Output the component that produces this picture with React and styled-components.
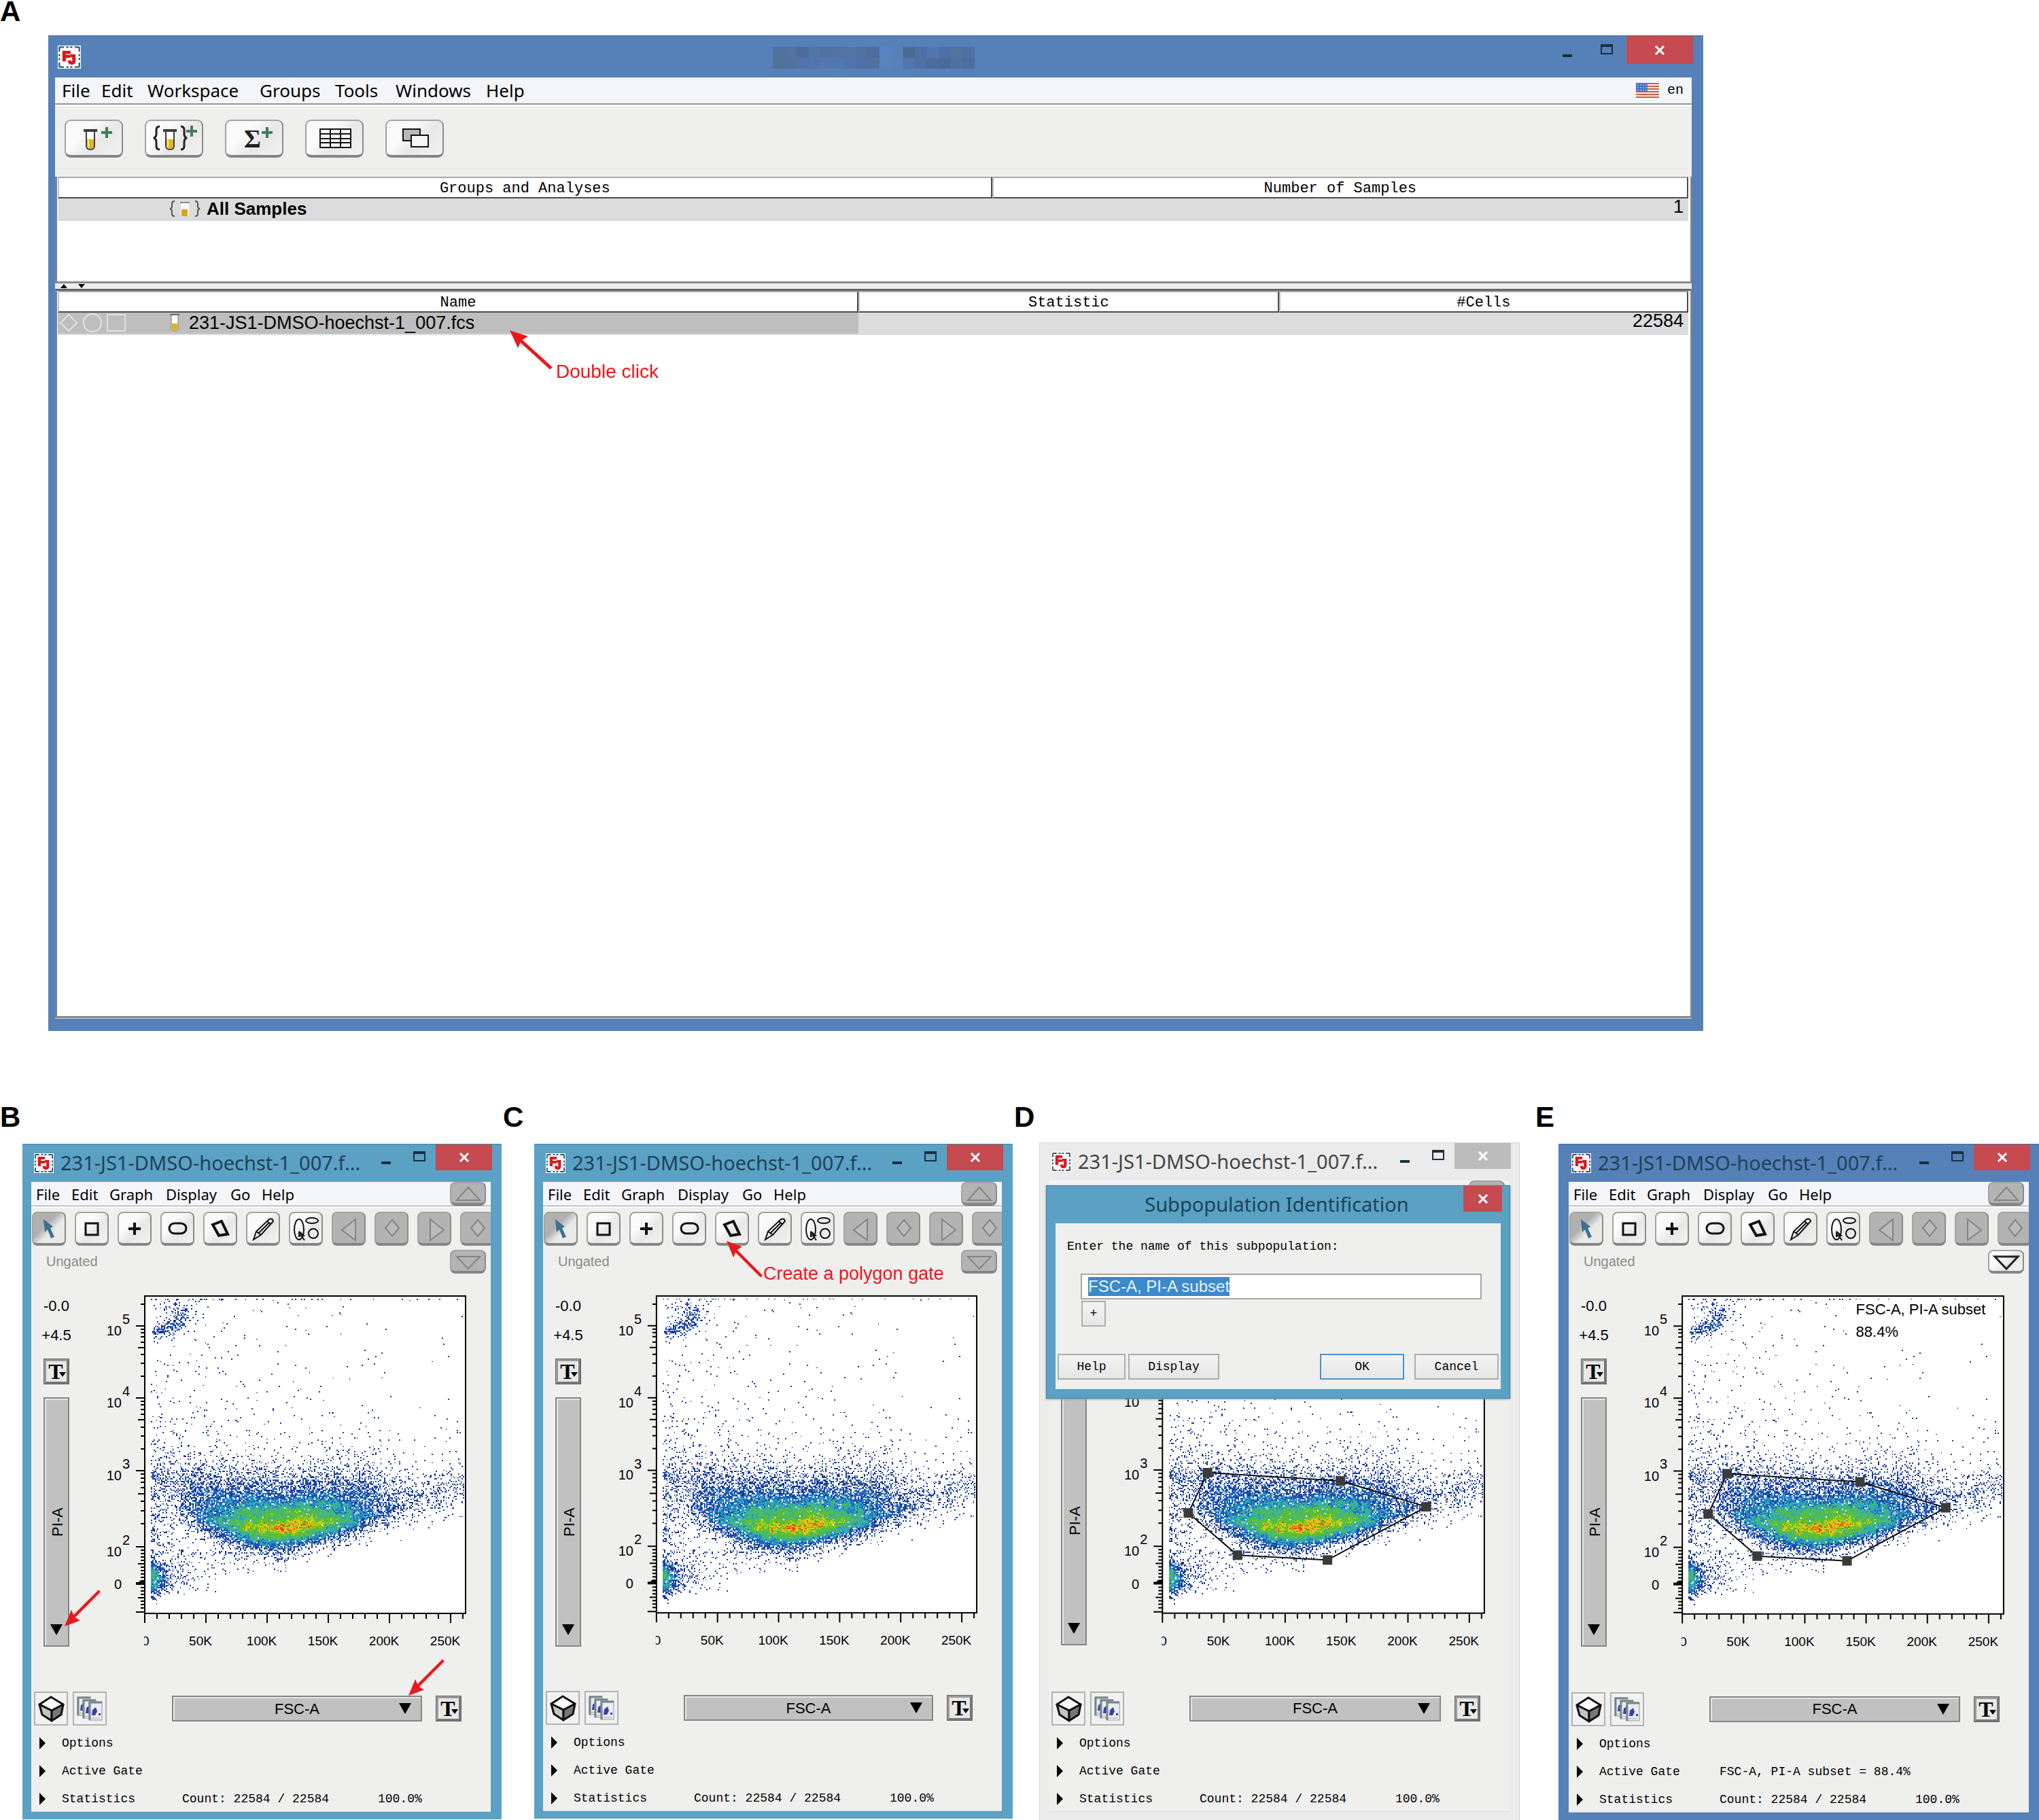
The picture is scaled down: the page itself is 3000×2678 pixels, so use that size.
import React, { useEffect, useRef } from "react";
import styled, { createGlobalStyle, css } from "styled-components";

const SANS = `"Liberation Sans", Arial, sans-serif`;
const UI = `"Noto Sans", "Open Sans", sans-serif`;
const MONO = `"Liberation Mono", monospace`;
const FILE_NAME = "231-JS1-DMSO-hoechst-1_007";

const GlobalStyle = createGlobalStyle`
  * {
    box-sizing: border-box;
  }

  body {
    margin: 0;
    background: #ffffff;
    color: #000000;
    font-family: ${SANS};
  }

  button,
  input,
  select {
    margin: 0;
    padding: 0;
    border-radius: 0;
    font: inherit;
    color: inherit;
  }

  svg {
    display: block;
  }
`;

/* ---------- page ---------- */

const Page = styled.main`
  overflow: hidden;
`;

const PanelLabel = styled.h2`
  margin: 0 0 ${({ $gap }) => $gap || 22}px;
  font-size: 42px;
  line-height: 34px;
  font-weight: bold;
`;

const WorkspacePanel = styled.section`
  width: 84%;
  padding-right: 14px;
  margin-bottom: 110px;
`;

const PanelRow = styled.div`
  display: grid;
  grid-template-columns: 740fr 752fr 767fr 741fr;
`;

const Panel = styled.section`
  min-width: 0;
`;

const WindowSlot = styled.div`
  position: relative;
  margin-left: ${({ $left }) => $left}px;
  margin-right: ${({ $right }) => $right}px;
`;

/* ---------- window frame ---------- */

const frames = {
  teal: css`
    background: #5aa1c4;
    border-top: 1px solid #4583a5;
  `,
  blue: css`
    background: #5680b8;
    border-top: 1px solid #4469a0;
  `,
  inactive: css`
    background: #ebebeb;
    border: 1px solid #d6d6d6;
  `,
};

const Frame = styled.div`
  ${({ $tone }) => frames[$tone]}
  padding: 0 ${({ $right }) => $right}px ${({ $bottom }) => $bottom}px
    ${({ $left }) => $left}px;
`;

const TitleBar = styled.header`
  display: flex;
  align-items: center;
  height: ${({ $large }) => ($large ? 61 : 55)}px;
  padding-left: 4px;
  margin-right: -2px;
  gap: 10px;
`;

const Title = styled.h3`
  flex: 1;
  margin: 0 0 2px;
  font-family: ${UI};
  font-size: 29px;
  line-height: 40px;
  font-weight: normal;
  white-space: nowrap;
  color: ${({ $tone }) => ($tone === "inactive" ? "#444444" : "#1c4358")};
`;

const Mosaic = styled.svg`
  flex: 1;
`;

const WindowControls = styled.div`
  display: flex;
  align-self: flex-start;
`;

const ControlButton = styled.button`
  display: flex;
  align-items: center;
  justify-content: center;
  width: ${({ $large }) => ($large ? 58 : 49)}px;
  height: ${({ $large }) => ($large ? 41 : 38)}px;
  border: 0;
  background: transparent;
`;

const CloseButton = styled(ControlButton)`
  width: ${({ $large, $narrow }) => ($large ? 98 : $narrow ? 57 : 83)}px;
  background: ${({ $tone }) => ($tone === "inactive" ? "#bcbcbc" : "#c54b50")};
`;

const WindowBody = styled.div`
  overflow: hidden;
  background: #efefee;
  border-bottom: 1px solid #d0dbe0;
`;

const MenuBar = styled.nav`
  display: flex;
  align-items: center;
  justify-content: space-between;
  height: ${({ $large }) => ($large ? 40 : 36)}px;
  padding-left: ${({ $large }) => ($large ? 10 : 7)}px;
  padding-right: ${({ $large }) => ($large ? 12 : 7)}px;
  border-bottom: ${({ $large }) => ($large ? 2 : 1)}px solid #969696;
  background: #f4f5f8;
  font-family: ${UI};
  font-size: ${({ $large }) => ($large ? 26 : 22)}px;
  line-height: 32px;
`;

const Menus = styled.div`
  display: grid;
  grid-template-columns: ${({ $columns }) => $columns};
  visibility: ${({ $covered }) => ($covered ? "hidden" : "visible")};
`;

const MenuButton = styled.button`
  border: 0;
  background: transparent;
  text-align: left;
  white-space: nowrap;
`;

const Language = styled.div`
  display: flex;
  align-items: center;
  gap: 12px;
  font-family: ${MONO};
  font-size: 20px;
`;

/* ---------- workspace window ---------- */

const WorkspaceToolbar = styled.div`
  display: flex;
  gap: 32px;
  padding: 20px 14px 28px;
  border-top: 2px solid #ffffff;
`;

const raised = css`
  border: 2px solid #a3a3a3;
  border-right-color: #8b8b8b;
  border-bottom: 4px solid #858585;
  background: linear-gradient(135deg, #fafafa 0 35%, #e7e7e7 60%, #f3f3f3);
`;

const LargeTool = styled.button`
  ${raised}
  width: 86px;
  height: 56px;
  border-radius: 9px;

  svg {
    margin: -2px;
  }
`;

const Pane = styled.div`
  min-height: ${({ $height }) => $height}px;
  padding: 0 3px 0 1px;
  border-left: 3px solid #7282a0;
  border-right: 2px solid #8a8a8a;
  border-bottom: 3px solid #8b8b8b;
  border-top: ${({ $ruled }) => ($ruled ? "3px solid #666666" : "0")};
  background: #ffffff;
`;

const Splitter = styled.div`
  display: flex;
  align-items: center;
  gap: 16px;
  height: 8px;
  padding-left: 8px;
  background: #eeeeee;
`;

const DataTable = styled.table`
  width: 100%;
  table-layout: fixed;
  border-collapse: separate;
  border-spacing: 0;

  th {
    height: 32px;
    padding: 3px 0 0;
    border: 2px solid #4c4c4c;
    border-top-color: #a8a8a8;
    border-left-color: #c4c4c4;
    font-family: ${MONO};
    font-size: 22px;
    line-height: 25px;
    font-weight: normal;
  }

  td {
    height: 33px;
    padding: 0 7px 2px 0;
    background: #dcdcdc;
    border-bottom: 2px solid #d6dce0;
    font-size: 27px;
    line-height: 28px;
  }
`;

const Column = styled.col`
  width: ${({ $width }) => $width};
`;

const NumberCell = styled.td`
  && {
    padding-bottom: 6px;
    line-height: 24px;
  }

  text-align: right;
  vertical-align: top;
`;

const NameCell = styled.td`
  && {
    background: ${({ $selected }) => ($selected ? "#bebebe" : "#dcdcdc")};
  }
`;

const RowLabel = styled.div`
  display: flex;
  align-items: center;
  gap: ${({ $strong }) => ($strong ? 8 : 14)}px;
  height: 28px;
  padding-left: ${({ $strong }) => ($strong ? 163 : 3)}px;
  font-size: ${({ $strong }) => ($strong ? 26 : 27)}px;
  font-weight: ${({ $strong }) => ($strong ? "bold" : "normal")};
`;

const Shapes = styled.svg`
  margin-right: 48px;
`;

/* ---------- graph window ---------- */

const SmallTools = styled.div`
  display: flex;
  gap: 13px;
  padding: 6px 0 6px 1px;
  border-top: 2px solid #ffffff;
`;

const SmallTool = styled.button`
  ${raised}
  flex: none;
  width: 50px;
  height: 50px;
  border-radius: 8px;
  ${({ $active }) =>
    $active &&
    css`
      background: linear-gradient(135deg, #b0b0b0 40%, #e9e9e9 60%);
    `}
  ${({ $disabled }) =>
    $disabled &&
    css`
      background: #b3b3b3;
    `}

  svg {
    margin: -2px;
  }
`;

const StepButton = styled(SmallTool)`
  width: 53px;
  height: 35px;
`;

const GateRow = styled.div`
  display: flex;
  align-items: center;
  justify-content: space-between;
  padding: 0 7px 0 22px;
  font-size: 20px;
  color: #8a8a8a;
`;

const PlotRow = styled.div`
  display: flex;
`;

const AxisControls = styled.div`
  display: flex;
  flex: none;
  flex-direction: column;
  align-items: center;
  width: 74px;
  padding-top: 36px;
  gap: 19px;
`;

const ScaleRange = styled.div`
  display: grid;
  gap: 19px;
  margin-bottom: 3px;
  font-size: 22px;
  line-height: 24px;
  text-align: center;
`;

const TransformButton = styled.button`
  display: flex;
  flex: none;
  align-items: flex-end;
  justify-content: center;
  width: 38px;
  height: 38px;
  border: 4px solid #777777;
  border-top-color: #9b9b9b;
  border-left-color: #9b9b9b;
  outline: 1px solid #666666;
  outline-offset: -1px;
  background: #e8e8e8;
  font-family: "Liberation Serif", serif;
  font-size: 32px;
  line-height: 30px;
  font-weight: bold;

  svg {
    margin: 0 -2px 6px -6px;
  }
`;

const AxisPicker = styled.div`
  position: relative;
  border: 2px solid #858585;
  background: #c1c1c1;
  box-shadow: inset 2px 2px 0 #e6e6e6;
  ${({ $vertical }) =>
    $vertical
      ? css`
          width: 38px;
          height: 367px;
        `
      : css`
          flex: 1;
          height: 38px;
          margin-left: 89px;
          margin-right: 13px;
        `}

  select {
    width: 100%;
    height: 100%;
    border: 0;
    background: transparent;
    appearance: none;
    font-size: 22px;
    text-align: center;
    text-align-last: center;
    ${({ $vertical }) =>
      $vertical &&
      css`
        padding-right: 6px;
        writing-mode: vertical-rl;
        transform: rotate(180deg);
      `}
  }

  svg {
    position: absolute;
    pointer-events: none;
    ${({ $vertical }) =>
      $vertical
        ? css`
            left: 8px;
            bottom: 15px;
          `
        : css`
            right: 14px;
            top: 9px;
          `}
  }
`;

const Chart = styled.svg`
  flex: 1;
  min-width: 0;
  height: auto;
  font-family: ${SANS};
`;

const BottomTools = styled.div`
  display: flex;
  align-items: center;
  gap: 7px;
  padding: 58px 43px 0 4px;
`;

const FlatButton = styled.button`
  width: 50px;
  height: 50px;
  border: 2px solid #b2b2b2;
  background: #f1f1f1;

  svg {
    margin: -2px;
  }
`;

const InfoList = styled.div`
  display: grid;
  gap: 17px;
  padding: 14px 0 6px 12px;
  font-family: ${MONO};
  font-size: 18px;
  line-height: 24px;
  white-space: pre;
`;

const InfoRow = styled.div`
  display: grid;
  grid-template-columns: 210px 288px auto;
`;

const Disclosure = styled.button`
  display: flex;
  align-items: center;
  gap: 24px;
  border: 0;
  background: transparent;
`;

/* ---------- dialog ---------- */

const DialogWindow = styled.div`
  position: absolute;
  top: 63px;
  left: 10px;
  right: 14px;
  padding: 0 13px 13px 13px;
  border: 1px solid #4583a5;
  background: #5aa1c4;
  box-shadow: 0 1px 3px #999999;
`;

const DialogTitle = styled(Title)`
  padding-left: 57px;
  text-align: center;
`;

const DialogForm = styled.form`
  display: grid;
  gap: 2px;
  padding: 20px 3px 14px;
  background: #efefee;
  font-family: ${MONO};
  font-size: 18px;
  line-height: 28px;

  label {
    padding-left: 14px;
    margin-bottom: 24px;
  }
`;

const NameInput = styled.input`
  height: 38px;
  margin: 0 25px 0 34px;
  padding-left: 9px;
  border: 2px solid #a6a6a6;
  outline: 0;
  background: #ffffff;
  font-family: ${SANS};
  font-size: 24px;
  line-height: 34px;

  &::selection {
    color: #e6f3fb;
    background: #3b8acb;
  }
`;

const DialogButton = styled.button`
  width: ${({ $width }) => $width}px;
  height: 38px;
  border: 2px solid ${({ $primary }) => ($primary ? "#4a92cf" : "#adadad")};
  background: linear-gradient(#f3f3f3, #e6e6e6);
`;

const AddButton = styled(DialogButton)`
  margin-left: 35px;
`;

const DialogActions = styled.div`
  display: flex;
  gap: 4px;
  padding-top: 38px;
`;

const Spacer = styled.span`
  flex: 1;
`;

const Gap = styled.span`
  width: 7px;
`;

/* ---------- annotations ---------- */

const Callout = styled.div`
  position: absolute;
  left: ${({ $x }) => $x}px;
  top: ${({ $y }) => $y}px;
  display: flex;
  align-items: flex-end;
  gap: ${({ $gap }) => $gap || 0}px;
  font-size: ${({ $size }) => $size || 28}px;
  line-height: 28px;
  white-space: nowrap;
  color: #e8191d;
  pointer-events: none;

  span {
    margin-bottom: ${({ $drop }) => -($drop || 0)}px;
  }
`;

/* ---------- drawings ---------- */

const Logo = ({ size = 29 }) => (
  <svg width={size} height={size} viewBox="0 0 30 30">
    <rect width="30" height="30" fill="#ffffff" />
    <rect
      x="2"
      y="2"
      width="26"
      height="26"
      fill="none"
      stroke="#36586b"
      strokeWidth="2"
      strokeDasharray="6 3 3 2 3 3 6 0"
    />
    <g
      fill="#d81920"
      stroke="#d81920"
      strokeWidth="2"
      fontFamily="Liberation Sans"
      fontWeight="bold"
      fontSize="17"
    >
      <text x="6" y="19">
        F
      </text>
      <text x="14" y="24">
        J
      </text>
    </g>
  </svg>
);

const Minimise = () => (
  <svg width="16" height="28">
    <rect x="1" y="20" width="14" height="4" fill="#17303f" />
  </svg>
);

const Maximise = () => (
  <svg width="20" height="20">
    <path
      d="M2 2h16v13h-16zM2 4h16"
      fill="none"
      stroke="#17303f"
      strokeWidth="2"
    />
  </svg>
);

const Cross = () => (
  <svg width="16" height="14">
    <path d="M2 1l12 12M14 1l-12 12" stroke="#ffffff" strokeWidth="3" />
  </svg>
);

const Flag = () => (
  <svg width="34" height="22">
    <rect width="34" height="22" fill="#f7f1ef" />
    <path
      d="M0 1h34M0 5h34M0 9h34M0 13h34M0 17h34M0 21h34"
      stroke="#cf5a52"
      strokeWidth="2"
    />
    <rect width="17" height="13" fill="#4a72bd" />
    <path
      d="M2 3h14M2 7h14M2 11h14"
      stroke="#dbe6f7"
      strokeDasharray="2 2"
      strokeWidth="1"
    />
  </svg>
);

const Triangle = ({ points, size = [18, 16] }) => (
  <svg width={size[0]} height={size[1]}>
    <polygon points={points} fill="#000000" />
  </svg>
);

const Tube = ({ x }) => (
  <g transform={`translate(${x} 14)`}>
    <path
      d="M4 2v22q0 6 6 6t6-6v-22"
      fill="#ffffff"
      stroke="#3d3d3d"
      strokeWidth="2"
    />
    <path d="M5 15h10v9q0 5-5 5t-5-5z" fill="#e3b51f" />
    <path d="M7 16v11" stroke="#fff0a0" strokeWidth="2" />
    <path d="M0 2h20" stroke="#3d3d3d" strokeWidth="4" />
  </g>
);

const Plus = ({ x, y }) => (
  <path
    d={`M${x - 8} ${y}h16M${x} ${y - 8}v16`}
    stroke="#447c5b"
    strokeWidth="4"
  />
);

const largeIcons = {
  "Add sample": (
    <>
      <Tube x={28} />
      <Plus x={62} y={19} />
    </>
  ),
  "Add group": (
    <>
      <path
        d="M22 10q-5 0-5 5v6q0 5-4 6q4 1 4 6v6q0 5 5 5M53 10q5 0 5 5v6q0 5 4 6q-4 1-4 6v6q0 5-5 5"
        fill="none"
        stroke="#222222"
        strokeWidth="3"
      />
      <Tube x={27} />
      <Plus x={69} y={17} />
    </>
  ),
  "Add statistic": (
    <>
      <text
        x="28"
        y="41"
        fontFamily="Liberation Serif"
        fontWeight="bold"
        fontSize="38"
        fill="#222222"
      >
        Σ
      </text>
      <Plus x={62} y={19} />
    </>
  ),
  "Table editor": (
    <path
      d="M22 14h45v27h-45zM37 14v27M52 14v27M22 21h45M22 28h45M22 34h45"
      fill="#ffffff"
      stroke="#111111"
      strokeWidth="2"
    />
  ),
  "Layout editor": (
    <g stroke="#111111" strokeWidth="2">
      <rect x="26" y="14" width="25" height="17" fill="#b9b9b9" />
      <rect x="38" y="23" width="25" height="17" fill="#f5f5f5" />
    </g>
  ),
};

const smallIcons = {
  Select: <path d="M17 11l14 11-4 2 6 13-5 2-5-13-4 4z" fill="#3b718e" />,
  Rectangle: (
    <rect x="16" y="17" width="18" height="17" fill="none" strokeWidth="3" />
  ),
  Quadrant: <path d="M16 25h18M25 16v18" strokeWidth="4" />,
  Ellipse: (
    <rect
      x="13"
      y="17"
      width="25"
      height="15"
      rx="8"
      fill="none"
      strokeWidth="3"
    />
  ),
  Polygon: (
    <path d="M14 19l13-5 9 19-13 2z" fill="none" strokeWidth="4" />
  ),
  Pencil: (
    <path
      d="M11 41l4-12 19-18q5-2 6 3l-18 20zM15 29l7 5M31 14l6 5M18 32l15-15"
      fill="none"
      strokeWidth="2"
    />
  ),
  Magnetic: (
    <g fill="none" strokeWidth="2">
      <ellipse cx="15" cy="26" rx="7" ry="15" />
      <ellipse cx="34" cy="13" rx="9" ry="4" />
      <ellipse cx="36" cy="32" rx="7" ry="7" />
      <path d="M15 29l7 6-3 1 4 6M15 29v7l3-1" fill="#111111" />
    </g>
  ),
};

const navIcons = {
  Previous: "M35 11v31l-20-15z",
  Parent: "M26 12l10 12-10 12-10-12z",
  Next: "M19 11v31l20-15z",
  Child: "M26 12l10 12-10 12-10-12z",
};

const SampleGroupIcon = () => (
  <svg width="48" height="28">
    <path
      d="M9 3q-4 0-4 4v4q0 3-3 3q3 1 3 4v4q0 3 4 3M39 3q4 0 4 4v4q0 3 3 3q-3 1-3 4v4q0 3-4 3"
      fill="none"
      stroke="#555555"
      strokeWidth="2"
    />
    <path d="M18 5h12v20h-12z" fill="#f8f8f8" />
    <path d="M19 15h9v10h-9z" fill="#d8a41a" />
    <path d="M17 5h14" stroke="#8a8a8a" strokeWidth="2" />
  </svg>
);

const SampleIcon = () => (
  <svg width="14" height="28">
    <path d="M2 2h10v20q0 4-5 4t-5-4z" fill="#ffffff" stroke="#777777" />
    <path d="M3 15h8v7q0 3-4 3t-4-3z" fill="#e2b41c" />
    <path d="M0 2h14" stroke="#666666" strokeWidth="2" />
  </svg>
);

const CubeIcon = () => (
  <svg width="50" height="50">
    <g stroke="#111111" strokeWidth="3" strokeLinejoin="round">
      <path d="M25 8l18 11-17 9-18-9z" fill="#fbfbfb" />
      <path d="M8 19l18 9v15l-14-9z" fill="#c4c4c4" />
      <path d="M43 19l-17 9v15l14-9z" fill="#777777" />
    </g>
  </svg>
);

const PagesIcon = () => (
  <svg width="50" height="50">
    {[
      [7, 8],
      [15, 12],
      [24, 15],
    ].map(([x, y]) => (
      <g key={x} transform={`translate(${x} ${y})`}>
        <rect width="19" height="27" fill="#e9edf0" stroke="#8f9a9d" />
        <path d="M0 1h19M1 0v27" stroke="#78868a" strokeWidth="3" />
        <path d="M4 20l1-8 5-4 2 6-3 6zM14 17h3v3h-3z" fill="#3940a6" />
        <path d="M3 24h13" stroke="#a4a9ac" />
      </g>
    ))}
  </svg>
);

const Arrow = ({ down, small }) => (
  <svg
    width={small ? 54 : 64}
    height={small ? 54 : 58}
    viewBox="0 0 64 58"
    preserveAspectRatio="none"
  >
    <g transform={down ? "translate(0 58) scale(1 -1)" : undefined}>
      <path d="M16 15L61 56" stroke="#e8191d" strokeWidth="5" />
      <path d="M0 0l27 9-10 6-5 11z" fill="#e8191d" />
    </g>
  </svg>
);

/* ---------- scatter data ---------- */

const COLS = 256;
const ROWS = 254;
const PALETTE = [
  "#1c3899",
  "#1d4fab",
  "#2179c2",
  "#2ea3c4",
  "#3bb59c",
  "#4dba5a",
  "#5cbd2a",
  "#74c41f",
  "#c3d41a",
  "#f0b614",
  "#e9451b",
];

const createRandom = (seed) => {
  let state = seed;
  return () => {
    state = (state * 1664525 + 1013904223) % 4294967296;
    return state / 4294967296;
  };
};

const buildScatter = () => {
  const random = createRandom(22584);
  const normal = () =>
    Math.sqrt(-2 * Math.log(random() + 1e-9)) * Math.cos(6.28318 * random());
  const expo = (mean) => -Math.log(random() + 1e-9) * mean;
  const cells = new Float32Array(COLS * ROWS);

  const add = (x, y) => {
    if (x < 0.02 || x > 0.995 || y < 0.008 || y > 0.99) return;
    cells[Math.floor(y * ROWS) * COLS + Math.floor(x * COLS)] += 1;
  };
  const ridge = (x) => {
    const d = x - 0.42;
    return d < 0 ? 0.727 - 0.75 * d * d : 0.727 - 0.12 * d - 0.16 * d * d;
  };
  const repeat = (count, draw) => {
    for (let i = 0; i < count; i += 1) draw();
  };

  // main population, with a sharp lower edge and a softer upper one
  repeat(9400, () => {
    const x = 0.465 + normal() * 0.118;
    const n = normal();
    const edge = x > 0.42 ? 1 - (x - 0.42) * 0.9 : 1;
    add(x, ridge(x) + n * (n > 0 ? 0.034 * edge : 0.043));
  });
  repeat(9400, () => {
    const n = normal();
    const x = 0.38 + n * (n > 0 ? 0.18 : 0.14);
    if (x < 0.11 && random() < 0.7) return;
    const m = normal();
    add(x, ridge(x) - 0.012 + m * (m > 0 ? 0.04 : 0.07));
  });
  repeat(1500, () => {
    const x = 0.02 + random() * 0.72;
    add(x, ridge(x) - 0.03 - expo(0.075));
  });
  repeat(420, () => {
    const x = 0.62 + random() * 0.38;
    add(x, ridge(x) + normal() * 0.035);
  });
  repeat(250, () => {
    const x = 0.55 + random() * 0.45;
    add(x, ridge(x) - expo(0.09));
  });

  // debris in the lower left corner
  repeat(620, () => add(0.02 + expo(0.022), 0.887 + normal() * 0.027));
  repeat(420, () => add(0.02 + expo(0.06), 0.55 + random() * 0.38));
  repeat(110, () => add(0.1 + random() * 0.35, 0.8 + expo(0.03)));

  // bright events along the top
  repeat(190, () => {
    const x = 0.025 + random() * 0.11;
    add(x, 0.122 - (x - 0.02) * 0.4 + normal() * 0.012);
  });
  repeat(90, () => add(0.11 + normal() * 0.035, 0.045 + normal() * 0.022));
  repeat(35, () => add(0.02 + expo(0.3), 0.01));
  repeat(60, () => add(0.03 + expo(0.35), random() * 0.12));
  repeat(150, () => add(0.02 + expo(0.3), 0.12 + random() * 0.38));

  const paths = PALETTE.map(() => "");
  for (let y = 0; y < ROWS; y += 1) {
    for (let x = 0; x < COLS; x += 1) {
      const own = cells[y * COLS + x];
      if (own) {
        let sum = 0;
        for (let dy = -2; dy <= 2; dy += 1) {
          for (let dx = -2; dx <= 2; dx += 1) {
            sum += cells[(y + dy) * COLS + x + dx] || 0;
          }
        }
        const density = (sum / 25) * 0.8 + own * 0.2;
        const level = Math.floor(
          9.3 * (density / 7) ** 0.75 + (random() - 0.5) * 3 - 1.1
        );
        paths[Math.max(0, Math.min(PALETTE.length - 1, level))] +=
          `M${x} ${y}h1v1h-1z`;
      }
    }
  }
  return paths;
};

const SCATTER = buildScatter();

const PLOT = { x: 93, y: 33, w: 472, h: 467 };
const DECADES = [
  { power: 5, y: 44 },
  { power: 4, y: 150 },
  { power: 3, y: 257 },
  { power: 2, y: 369 },
];
const X_LABELS = ["50K", "100K", "150K", "200K", "250K"];
const GATE = [
  [66, 261],
  [261, 273],
  [387, 311],
  [242, 389],
  [110, 382],
  [38, 320],
];

const yTicks = () => {
  let d = "";
  const tick = (y, length) => {
    d += `M${PLOT.x} ${PLOT.y + Math.round(y)}h-${length}`;
  };
  DECADES.forEach(({ y }, i) => {
    tick(y, 13);
    const span = i === 0 ? 106 : y - DECADES[i - 1].y;
    for (let k = 2; k < 10; k += 1) {
      const at = y - span * Math.log10(k);
      if (at > 4) tick(at, k === 5 ? 10 : 6);
    }
  });
  for (let y = 374; y < 420; y += 5) tick(y, y === 394 ? 10 : 6);
  tick(420, 8);
  tick(422, 13);
  tick(424, 13);
  for (let y = 429; y < 464; y += 5) tick(y, y === 444 ? 10 : 6);
  tick(465, 13);
  return d;
};

const xTicks = () => {
  let d = "";
  for (let i = 0; i <= 26; i += 1) {
    d += `M${PLOT.x + Math.round(i * 18)} ${PLOT.y + PLOT.h}v${
      i % 5 === 0 ? 14 : 8
    }`;
  }
  return d;
};

const TICKS = yTicks() + xTicks();

const ScatterChart = ({ gated, gateLabel }) => (
  <Chart viewBox="0 0 602 557" role="img" aria-label="PI-A against FSC-A">
    <rect x={PLOT.x} y={PLOT.y} width={PLOT.w} height={PLOT.h} fill="#ffffff" />
    <svg
      x={PLOT.x}
      y={PLOT.y}
      width={PLOT.w}
      height={PLOT.h}
      viewBox={`0 0 ${COLS} ${ROWS}`}
      preserveAspectRatio="none"
      shapeRendering="crispEdges"
    >
      {SCATTER.map((d, i) => (
        <path key={PALETTE[i]} d={d} fill={PALETTE[i]} />
      ))}
    </svg>
    {gateLabel && (
      <rect
        x={PLOT.x + 250}
        y={PLOT.y + 5}
        width="205"
        height="60"
        fill="#ffffff"
      />
    )}
    <rect
      x={PLOT.x}
      y={PLOT.y}
      width={PLOT.w}
      height={PLOT.h}
      fill="none"
      stroke="#000000"
      strokeWidth="2"
    />
    <path d={TICKS} stroke="#000000" strokeWidth="2" />

    <g fontSize="20">
      {DECADES.map(({ power, y }) => (
        <React.Fragment key={power}>
          <text x="59" y={PLOT.y + y + 14} textAnchor="end">
            10
          </text>
          <text x="60" y={PLOT.y + y - 3}>
            {power}
          </text>
        </React.Fragment>
      ))}
      <text x="59" y={PLOT.y + 431} textAnchor="end">
        0
      </text>
    </g>
    <g fontSize="19">
      <svg x={PLOT.x - 1} y="525" width="12" height="24">
        <text x="-3" y="22">
          0
        </text>
      </svg>
      {X_LABELS.map((label, i) => (
        <text
          key={label}
          x={PLOT.x + 82 + i * 90}
          y="547"
          textAnchor="middle"
        >
          {label}
        </text>
      ))}
    </g>

    {gated && (
      <g transform={`translate(${PLOT.x} ${PLOT.y})`}>
        <polygon
          points={GATE.join(" ")}
          fill="none"
          stroke="#111111"
          strokeWidth="2"
        />
        {GATE.map(([x, y]) => (
          <rect
            key={x}
            x={x - 7}
            y={y - 7}
            width="14"
            height="14"
            fill="#3b3b3b"
          />
        ))}
      </g>
    )}
    {gateLabel && (
      <g fontSize="22">
        <text x={PLOT.x + 255} y={PLOT.y + 27}>
          FSC-A, PI-A subset
        </text>
        <text x={PLOT.x + 255} y={PLOT.y + 60}>
          88.4%
        </text>
      </g>
    )}
  </Chart>
);

/* ---------- components ---------- */

const Controls = ({ large, tone }) => (
  <WindowControls>
    <ControlButton type="button" aria-label="Minimise" $large={large}>
      <Minimise />
    </ControlButton>
    <ControlButton type="button" aria-label="Maximise" $large={large}>
      <Maximise />
    </ControlButton>
    <CloseButton type="button" aria-label="Close" $large={large} $tone={tone}>
      <Cross />
    </CloseButton>
  </WindowControls>
);

const MenuItems = ({ items, columns, covered }) => (
  <Menus $columns={columns} $covered={covered}>
    {items.map((item) => (
      <MenuButton type="button" key={item}>
        {item}
      </MenuButton>
    ))}
  </Menus>
);

// hidden document name: two rows of flat colour blocks
const BLOCK = 35 / 2;
const BLOCKS = [
  "5070a0 5272a0 4c6b9c 5275a5 5070a0 5272a4 5076a8 50719f 4d6d9d 5784c2 5881b5 496894 4d70a6 5476ae 4d70ab 51739e 4f70a6",
  "4f7396 53719f 5174a8 5176ad 5377ae 5278af 5073a9 4e70a9 51729c 5784b9 5681ba 5275ad 4e70a3 4c6c9e 4b6a9b 5070a1 4f6e9e",
].map((row) => row.split(" "));

const WorkspaceWindow = () => (
  <WindowSlot $left={71} $right={0}>
    <Frame $tone="blue" $left={10} $right={17} $bottom={18}>
      <TitleBar $large>
        <Logo size={34} />
        <Mosaic height="34" viewBox="0 0 2150 34" preserveAspectRatio="none">
          {BLOCKS.map((row, y) =>
            row.map((fill, x) => (
              <rect
                key={x * 2 + y}
                x={1014 + x * BLOCK}
                y={2 + y * 16}
                width={BLOCK + 1}
                height="16"
                fill={`#${fill}`}
              />
            ))
          )}
        </Mosaic>
        <Controls large />
      </TitleBar>
      <WindowBody>
        <MenuBar $large>
          <MenuItems
            items={[
              "File",
              "Edit",
              "Workspace",
              "Groups",
              "Tools",
              "Windows",
              "Help",
            ]}
            columns="58px 68px 165px 111px 89px 133px auto"
          />
          <Language>
            <Flag />
            en
          </Language>
        </MenuBar>
        <WorkspaceToolbar>
          {Object.keys(largeIcons).map((name) => (
            <LargeTool type="button" key={name} aria-label={name}>
              <svg width="86" height="56">
                {largeIcons[name]}
              </svg>
            </LargeTool>
          ))}
        </WorkspaceToolbar>

        <Pane $height={157}>
          <DataTable>
            <colgroup>
              <Column $width="57.3%" />
              <Column />
            </colgroup>
            <thead>
              <tr>
                <th>Groups and Analyses</th>
                <th>Number of Samples</th>
              </tr>
            </thead>
            <tbody>
              <tr>
                <NameCell>
                  <RowLabel $strong>
                    <SampleGroupIcon />
                    All Samples
                  </RowLabel>
                </NameCell>
                <NumberCell>1</NumberCell>
              </tr>
            </tbody>
          </DataTable>
        </Pane>
        <Splitter>
          <Triangle points="0,7 5,1 10,7" size={[10, 8]} />
          <Triangle points="0,1 5,7 10,1" size={[10, 8]} />
        </Splitter>
        <Pane $height={1073} $ruled>
          <DataTable>
            <colgroup>
              <Column $width="49.1%" />
              <Column $width="25.8%" />
              <Column />
            </colgroup>
            <thead>
              <tr>
                <th>Name</th>
                <th>Statistic</th>
                <th>#Cells</th>
              </tr>
            </thead>
            <tbody>
              <tr>
                <NameCell $selected>
                  <RowLabel>
                    <Shapes width="100" height="28">
                      <g fill="none" stroke="#e2e2e2" strokeWidth="2">
                        <path d="M13 2l12 12-12 12-12-12z" />
                        <circle cx="48" cy="14" r="13" />
                        <rect x="70" y="2" width="26" height="24" />
                      </g>
                    </Shapes>
                    <SampleIcon />
                    {FILE_NAME}.fcs
                  </RowLabel>
                </NameCell>
                <td />
                <NumberCell>22584</NumberCell>
              </tr>
            </tbody>
          </DataTable>
        </Pane>
      </WindowBody>
    </Frame>
    <Callout $x={679} $y={434} $gap={4} $drop={17}>
      <Arrow />
      <span>Double click</span>
    </Callout>
  </WindowSlot>
);

const Transform = () => (
  <TransformButton type="button" aria-label="Transform axis">
    T
    <Triangle points="0,0 10,0 5,7" size={[10, 8]} />
  </TransformButton>
);

const Axis = ({ name, vertical }) => (
  <AxisPicker $vertical={vertical}>
    <select aria-label={vertical ? "Y axis" : "X axis"} defaultValue={name}>
      <option>{name}</option>
    </select>
    <Triangle points="0,0 18,0 9,16" />
  </AxisPicker>
);

const GraphWindow = ({ tone, edges, gated, gateLabel, covered, children }) => (
  <>
    <Frame $tone={tone} $left={edges[0]} $right={edges[1]} $bottom={edges[2]}>
      <TitleBar>
        <Logo />
        <Title $tone={tone}>{FILE_NAME}.f...</Title>
        <Controls tone={tone} />
      </TitleBar>
      <WindowBody>
        <MenuBar>
          <MenuItems
            items={["File", "Edit", "Graph", "Display", "Go", "Help"]}
            columns="52px 56px 83px 95px 46px auto"
            covered={covered}
          />
          <StepButton type="button" aria-label="Previous sample" $disabled>
            <svg width="53" height="35">
              <path
                d="M27 8l17 19h-34z"
                fill="none"
                stroke="#858585"
                strokeWidth="2"
              />
            </svg>
          </StepButton>
        </MenuBar>
        <SmallTools>
          {Object.keys(smallIcons).map((name, i) => (
            <SmallTool
              type="button"
              key={name}
              aria-label={name}
              $active={i === 0}
            >
              <svg
                width="50"
                height="50"
                stroke={i === 0 ? "none" : "#111111"}
              >
                {smallIcons[name]}
              </svg>
            </SmallTool>
          ))}
          {Object.keys(navIcons).map((name) => (
            <SmallTool type="button" key={name} aria-label={name} $disabled>
              <svg width="50" height="50">
                <path
                  d={navIcons[name]}
                  fill="#bbbbbb"
                  stroke="#858585"
                  strokeWidth="2"
                />
              </svg>
            </SmallTool>
          ))}
        </SmallTools>
        <GateRow>
          Ungated
          <StepButton
            type="button"
            aria-label="Next sample"
            $disabled={!gateLabel}
          >
            <svg width="53" height="35">
              <path
                d="M10 10h34l-17 18z"
                fill="none"
                stroke={gateLabel ? "#222222" : "#858585"}
                strokeWidth={gateLabel ? 3 : 2}
              />
            </svg>
          </StepButton>
        </GateRow>
        <PlotRow>
          <AxisControls>
            <ScaleRange>
              <div>-0.0</div>
              <div>+4.5</div>
            </ScaleRange>
            <Transform />
            <Axis name="PI-A" vertical />
          </AxisControls>
          <ScatterChart gated={gated} gateLabel={gateLabel} />
        </PlotRow>
        <BottomTools>
          <FlatButton type="button" aria-label="Graph options">
            <CubeIcon />
          </FlatButton>
          <FlatButton type="button" aria-label="Multigraph overlays">
            <PagesIcon />
          </FlatButton>
          <Axis name="FSC-A" />
          <Transform />
        </BottomTools>
        <InfoList>
          {[
            ["Options"],
            ["Active Gate", gateLabel && "FSC-A, PI-A subset = 88.4%"],
            ["Statistics", "Count: 22584 / 22584", "100.0%"],
          ].map(([name, value, share]) => (
            <InfoRow key={name}>
              <Disclosure type="button">
                <Triangle points="0,0 9,9 0,18" size={[9, 18]} />
                {name}
              </Disclosure>
              <span>{value}</span>
              <span>{share}</span>
            </InfoRow>
          ))}
        </InfoList>
      </WindowBody>
    </Frame>
    {children}
  </>
);

const SubpopulationDialog = () => {
  const $name = useRef(null);

  useEffect(() => {
    $name.current.focus({ preventScroll: true });
    $name.current.select();
  }, []);

  return (
    <DialogWindow role="dialog" aria-label="Subpopulation Identification">
      <TitleBar>
        <DialogTitle>Subpopulation Identification</DialogTitle>
        <WindowControls>
          <CloseButton type="button" aria-label="Close dialog" $narrow>
            <Cross />
          </CloseButton>
        </WindowControls>
      </TitleBar>
      <DialogForm onSubmit={(event) => event.preventDefault()}>
        <label htmlFor="subpopulation">
          Enter the name of this subpopulation:
        </label>
        <NameInput
          id="subpopulation"
          ref={$name}
          defaultValue="FSC-A, PI-A subset"
        />
        <AddButton type="button" $width={36}>
          +
        </AddButton>
        <DialogActions>
          <DialogButton type="button" $width={100}>
            Help
          </DialogButton>
          <DialogButton type="button" $width={134}>
            Display
          </DialogButton>
          <Spacer />
          <DialogButton type="submit" $width={124} $primary>
            OK
          </DialogButton>
          <Gap />
          <DialogButton type="button" $width={124}>
            Cancel
          </DialogButton>
        </DialogActions>
      </DialogForm>
    </DialogWindow>
  );
};

const App = () => (
  <Page>
    <GlobalStyle />
    <WorkspacePanel>
      <PanelLabel $gap={18}>A</PanelLabel>
      <WorkspaceWindow />
    </WorkspacePanel>

    <PanelRow>
      <Panel>
        <PanelLabel>B</PanelLabel>
        <WindowSlot $left={33} $right={2}>
          <GraphWindow tone="teal" edges={[13, 16, 11]}>
            <Callout $x={62} $y={656}>
              <Arrow down small />
            </Callout>
            <Callout $x={568} $y={758}>
              <Arrow down small />
            </Callout>
          </GraphWindow>
        </WindowSlot>
      </Panel>
      <Panel>
        <PanelLabel>C</PanelLabel>
        <WindowSlot $left={46} $right={2}>
          <GraphWindow tone="teal" edges={[13, 16, 11]}>
            <Callout $x={283} $y={143} $size={27} $drop={8}>
              <Arrow small />
              <span>Create a polygon gate</span>
            </Callout>
          </GraphWindow>
        </WindowSlot>
      </Panel>
      <Panel>
        <PanelLabel $gap={20}>D</PanelLabel>
        <WindowSlot $left={37} $right={23}>
          <GraphWindow tone="inactive" edges={[13, 14, 12]} gated covered>
            <SubpopulationDialog />
          </GraphWindow>
        </WindowSlot>
      </Panel>
      <Panel>
        <PanelLabel>E</PanelLabel>
        <WindowSlot $left={34} $right={0}>
          <GraphWindow tone="blue" edges={[15, 15, 11]} gated gateLabel />
        </WindowSlot>
      </Panel>
    </PanelRow>
  </Page>
);

export default App;
